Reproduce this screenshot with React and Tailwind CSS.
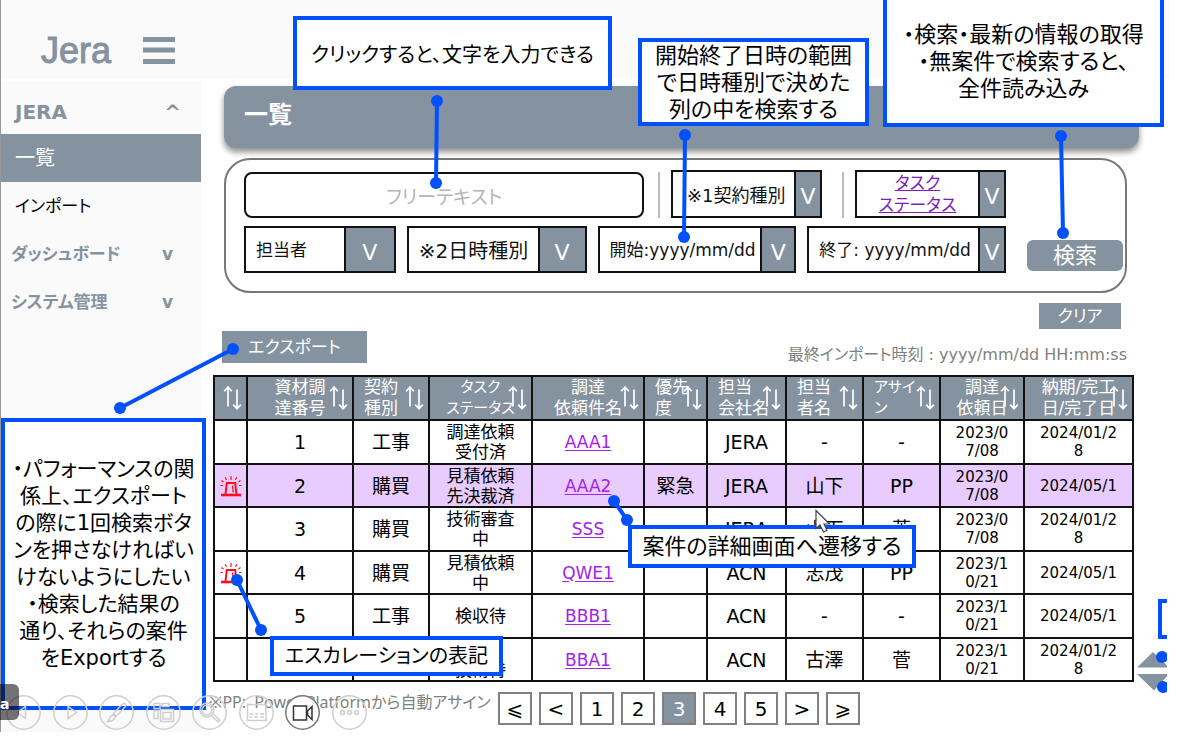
import React from "react";

const sortable = [
  { label: ["", ""], w: "w-[33px]", align: "text-center" },
  { label: ["資材調", "達番号"], w: "w-[106px]", align: "text-center" },
  { label: ["契約", "種別"], w: "w-[76px]", align: "text-left pl-[10px]" },
  { label: ["タスク", "ステータス"], w: "w-[103px]", align: "text-center text-[15px]" },
  { label: ["調達", "依頼件名"], w: "w-[112px]", align: "text-center" },
  { label: ["優先", "度"], w: "w-[63px]", align: "text-left pl-[10px]" },
  { label: ["担当", "会社名"], w: "w-[79px]", align: "text-left pl-[10px]" },
  { label: ["担当", "者名"], w: "w-[77px]", align: "text-left pl-[10px]" },
  { label: ["アサイ", "ン"], w: "w-[77px]", align: "text-left pl-[10px] text-[15px]" },
  { label: ["調達", "依頼日"], w: "w-[84px]", align: "text-center" },
  { label: ["納期/完工", "日/完了日"], w: "w-[109px]", align: "text-center" },
];

const rows = [
  { n: 1, type: "工事", status: ["調達依頼", "受付済"], name: "AAA1", pri: "", company: "JERA", person: "-", assign: "-", req: ["2023/0", "7/08"], due: ["2024/01/2", "8"] },
  { n: 2, alert: true, hot: true, type: "購買", status: ["見積依頼", "先決裁済"], name: "AAA2", pri: "緊急", company: "JERA", person: "山下", assign: "PP", req: ["2023/0", "7/08"], due: ["2024/05/1"] },
  { n: 3, type: "購買", status: ["技術審査", "中"], name: "SSS", pri: "", company: "JERA", person: "山下", assign: "菅", req: ["2023/0", "7/08"], due: ["2024/01/2", "8"] },
  { n: 4, alert: true, type: "購買", status: ["見積依頼", "中"], name: "QWE1", pri: "", company: "ACN", person: "志茂", assign: "PP", req: ["2023/1", "0/21"], due: ["2024/05/1"] },
  { n: 5, type: "工事", status: ["検収待"], name: "BBB1", pri: "", company: "ACN", person: "-", assign: "-", req: ["2023/1", "0/21"], due: ["2024/05/1"] },
  { n: 6, type: "購買", status: ["受付", "技術待"], name: "BBA1", pri: "", company: "ACN", person: "古澤", assign: "菅", req: ["2023/1", "0/21"], due: ["2024/01/2", "8"] },
];

function Lines({ items }) {
  return items.map((t, i) => (
    <span key={i} className="block whitespace-nowrap">
      {t}
    </span>
  ));
}

function SortIcon() {
  return (
    <svg viewBox="0 0 19 26" className="h-[26px] w-[19px]" fill="none" stroke="white" strokeWidth="1.7" aria-hidden="true">
      <path d="M5 21.500V2M1.200 6.200 5 2l3.800 4.200M14 4.500v19.300M10.200 19.600l3.800 4.200 3.800-4.200" />
    </svg>
  );
}

function Siren() {
  return (
    <svg viewBox="0 0 22 22" className="mx-auto h-[22px] w-[22px]" fill="none" stroke="#fb0d1b" aria-label="エスカレーション" role="img">
      <path d="M5.500 19 6.800 8h8.400l1.300 11" strokeWidth="2" />
      <path d="M12.600 10.500l.6 7" strokeWidth="1.300" />
      <path d="M1 20h20" strokeWidth="2.600" />
      <path d="M11 1v4M5.200 2.200l1.300 2.600M16.800 2.200l-1.300 2.600M1.500 5.500l2 1.400M20.500 5.500l-2 1.400M.5 10.500h2.500M21.500 10.500H19" strokeWidth="1.200" />
    </svg>
  );
}

function Select({ id, label, text, cols, height, size }) {
  return (
    <div className={`grid min-w-0 border-2 border-[#111] bg-white ${cols} ${height}`}>
      <select
        id={id}
        aria-label={label}
        className={`col-span-full col-start-1 row-start-1 h-full w-full min-w-0 appearance-none bg-transparent pt-0.5 text-[#111] outline-none ${size}`}
      >
        <option>{text}</option>
      </select>
      <span className="pointer-events-none col-start-2 row-start-1 flex items-center justify-center border-l-2 border-[#111] bg-[#8592a0] pt-1.5 text-[22px] leading-none text-white">
        V
      </span>
    </div>
  );
}

function Callout({ place, text, lines }) {
  return (
    <div className={`absolute flex flex-col items-center justify-center border-4 border-[#0050ff] bg-white text-center text-black ${place} ${text}`}>
      <Lines items={lines} />
    </div>
  );
}

const links = [
  [437, 101, 436, 183],
  [685, 135, 684, 237],
  [1061, 136, 1063, 233],
  [120, 408, 233, 349],
  [237, 580, 261, 630],
  [614, 501, 627, 520],
];

const tools = [
  ["前へ", <path d="M19.500 11.500v12l-8-6z" />],
  ["次へ", <path d="M15 11.500v12l8.500-6z" />],
  ["ペン", <path d="M26 8.500c1.500 1 1 2.500 0 3.500l-8.500 9-3-2.500 8.500-9c1-1 2-1.500 3-1zM14 19.500l2.500 2.200c-1 3-3.500 4.800-8 5 2-2 2.500-5.500 5.500-7.200z" />],
  ["一覧表示", <path d="M8 8.500h6v5H8zM16 8.500h7v3h-7zM8 15.500h4v8H8zM14.500 14.500h13v12h-13zM17 17.500h8v6.500h-8z" />],
  ["拡大", <path d="M22 15a7 7 0 1 1-14 0 7 7 0 0 1 14 0zM20 21l6 6 1.800-1.800-6-6M20 15a5 5 0 1 1-10 0 5 5 0 0 1 10 0z" />],
  ["字幕", <path d="M8.500 9.500h18.500v16H8.500zM10.500 19h4M16 19h3M21 19h4M10.500 22h3M15 22h4M21 22h4" />],
  ["カメラ", <path d="M8.500 11h13v14h-13zM22.500 16l4.500-4.500v13L22.500 20z" />],
  ["その他", <path d="M12.500 17.500a2 2 0 1 1-4 0 2 2 0 0 1 4 0zM19.500 17.500a2 2 0 1 1-4 0 2 2 0 0 1 4 0zM26.500 17.500a2 2 0 1 1-4 0 2 2 0 0 1 4 0z" />],
];

export default function App() {
  return (
    <div className="relative overflow-hidden bg-white font-['DejaVu_Sans','Noto_Sans_CJK_JP',sans-serif] text-black [font-feature-settings:'palt']">
      <div className="border-l border-[#999]">
        <header className="mr-4 flex h-[78px] items-center gap-8 bg-[#fafafa] pl-10 pt-6">
          <span className="font-['Liberation_Sans'] text-[36px] leading-none text-[#8592a0] [-webkit-text-stroke:1px_#8592a0]">Jera</span>
          <button type="button" aria-label="メニュー">
            <svg viewBox="0 0 32 28" className="h-7 w-8" fill="#8592a0" aria-hidden="true">
              <path d="M0 0h32v5H0zM0 10.500h32v5H0zM0 22h32v5H0z" />
            </svg>
          </button>
        </header>

        <div className="flex">
          <aside className="mt-1 w-[200px] shrink-0 bg-[#fafafa] pt-1 text-[17px] leading-none">
            <nav className="flex flex-col">
              <button type="button" className="flex h-12 items-center justify-between pl-3.5 pr-5 pt-1 text-[20px] font-bold text-[#8592a0]">
                <span>JERA</span>
                <span>^</span>
              </button>
              <a href="#list" className="flex h-12 items-center bg-[#8592a0] pl-3.5 text-[20px] text-white">一覧</a>
              <a href="#import" className="flex h-12 items-center pl-3.5">インポート</a>
              <button type="button" className="flex h-12 items-center justify-between pl-2.5 pr-7 font-bold text-[#8592a0]">
                <span>ダッシュボード</span>
                <span>v</span>
              </button>
              <button type="button" className="flex h-12 items-center justify-between pl-2.5 pr-7 font-bold text-[#8592a0]">
                <span>システム管理</span>
                <span>v</span>
              </button>
            </nav>
          </aside>

          <main className="min-w-0 flex-1 pb-[7px] pl-3 pr-[46px] pt-2">
            <h1 className="ml-[11px] h-[62px] rounded-xl bg-[#8592a0] pl-5 pt-4 text-[24px] font-bold leading-[26px] text-white shadow-[0_4px_6px_rgba(0,0,0,0.45)]">
              一覧
            </h1>

            <form className="ml-[11px] mr-3 mt-2.5 flex items-end gap-[21px] rounded-[26px] border-2 border-[#777] pb-[18px] pl-[18px] pr-0.5 pt-2.5" onSubmit={(e) => e.preventDefault()}>
              <div className="flex min-w-0 flex-1 flex-col gap-2">
                <div className="flex items-end">
                  <input
                    type="text"
                    aria-label="フリーテキスト"
                    placeholder="フリーテキスト"
                    className="h-[46px] min-w-0 flex-1 rounded-lg border-2 border-[#111] pt-1 text-center text-[19px] outline-none placeholder:text-[#b5b5b5]"
                  />
                  <span className="ml-3.5 mr-[11px] h-[46px] w-0.5 bg-[#bbb]" />
                  <div className="w-[151px]">
                    <Select id="contract" label="契約種別" text="※1契約種別" cols="grid-cols-[1fr_26px]" height="h-12" size="pl-3.5 text-[18px]" />
                  </div>
                  <span className="ml-5 mr-[11px] h-[46px] w-0.5 bg-[#bbb]" />
                  <div className="grid h-12 w-[151px] grid-cols-[1fr_26px] border-2 border-[#111]">
                    <a href="#status" className="flex flex-col items-center justify-center text-[17px] leading-[22px] text-[#7d1fc4] underline">
                      <Lines items={["タスク", "ステータス"]} />
                    </a>
                    <button type="button" aria-label="タスクステータスを選択" className="flex items-center justify-center border-l-2 border-[#111] bg-[#8592a0] pt-1.5 text-[22px] leading-none text-white">
                      V
                    </button>
                  </div>
                </div>
                <div className="grid grid-cols-[152fr_180fr_199fr_199fr] gap-[11px]">
                  <Select id="person" label="担当者" text="担当者" cols="grid-cols-[1fr_50px]" height="h-[47px]" size="pl-2.5 text-[17px]" />
                  <Select id="datetype" label="日時種別" text="※2日時種別" cols="grid-cols-[1fr_47px]" height="h-[47px]" size="pl-2.5 text-[20px]" />
                  <Select id="start" label="開始" text="開始:yyyy/mm/dd" cols="grid-cols-[1fr_34px]" height="h-[47px]" size="pl-2.5 text-[17px]" />
                  <Select id="end" label="終了" text="終了: yyyy/mm/dd" cols="grid-cols-[1fr_26px]" height="h-[47px]" size="pl-2.5 text-[17px]" />
                </div>
              </div>
              <button type="submit" className="mb-0.5 h-[31px] w-24 rounded-md bg-[#8592a0] text-[22px] leading-none text-white">
                検索
              </button>
            </form>

            <div className="mr-[18px] mt-2.5 flex justify-end">
              <button type="button" className="h-[26px] w-[82px] bg-[#8592a0] text-[17px] leading-none text-white">クリア</button>
            </div>
            <div className="ml-[9px] mr-3 mt-0.5 flex items-end justify-between">
              <button type="button" className="h-8 w-[145px] bg-[#8592a0] text-[17px] leading-none text-white">エクスポート</button>
              <p className="text-[16px] leading-4 text-[#808080]">最終インポート時刻 : yyyy/mm/dd HH:mm:ss</p>
            </div>

            <div className="mr-2 mt-3">
              <table className="w-full table-fixed border-collapse text-center text-[19px] leading-[20px]">
                <thead>
                  <tr className="h-11 bg-[#8592a0] text-[17px] leading-[21px] text-white">
                    {sortable.map((c, i) => (
                      <th key={i} scope="col" className={`relative border-2 border-[#111] p-0 font-normal ${c.w} ${c.align}`}>
                        <Lines items={c.label} />
                        <button type="button" aria-label={`${c.label.join("")}並べ替え`} className="absolute right-1 top-2">
                          <SortIcon />
                        </button>
                      </th>
                    ))}
                  </tr>
                </thead>
                <tbody>
                  {rows.map((r) => (
                    <tr key={r.n} className={`odd:h-[44px] even:h-[43px] ${r.hot ? "bg-[#e8ccff]" : "bg-white"}`}>
                      <td className="border-2 border-[#111] p-0">{r.alert && <Siren />}</td>
                      <td className="border-2 border-[#111] p-0">{r.n}</td>
                      <td className="border-2 border-[#111] p-0">{r.type}</td>
                      <td className="border-2 border-[#111] p-0 text-[17px]"><Lines items={r.status} /></td>
                      <td className="border-2 border-[#111] p-0 text-[17px]">
                        <a href={`#${r.name}`} className="text-[#a222ee] underline underline-offset-2">{r.name}</a>
                      </td>
                      <td className="border-2 border-[#111] p-0">{r.pri}</td>
                      <td className="border-2 border-[#111] p-0">{r.company}</td>
                      <td className="border-2 border-[#111] p-0">{r.person}</td>
                      <td className="border-2 border-[#111] p-0">{r.assign}</td>
                      <td className="border-2 border-[#111] p-0 text-[15px] leading-[18px]"><Lines items={r.req} /></td>
                      <td className="border-2 border-[#111] p-0 text-[15px] leading-[18px]"><Lines items={r.due} /></td>
                    </tr>
                  ))}
                </tbody>
              </table>
            </div>

            <div className="-ml-1 mt-2.5 flex items-start">
              <p className="w-[289px] shrink-0 whitespace-nowrap font-['Noto_Sans','Noto_Sans_CJK_JP',sans-serif] text-[16px] leading-5 text-[#808080]">※PP:&nbsp; Power Platformから自動アサイン</p>
              <nav aria-label="ページ" className="flex gap-[7px]">
                {["⩽", "<", "1", "2", "3", "4", "5", ">", "⩾"].map((p) => (
                  <button
                    key={p}
                    type="button"
                    className={`h-[33px] w-[34px] border-2 border-[#808080] text-[20px] leading-none ${p === "3" ? "bg-[#8592a0] text-white" : "bg-white"}`}
                  >
                    {p}
                  </button>
                ))}
              </nav>
            </div>
          </main>
        </div>
      </div>

      <Callout place="left-[293px] top-4 h-[74px] w-[319px]" text="pt-1 text-[20px] leading-[28px]" lines={["クリックすると、文字を入力できる"]} />
      <Callout place="left-[638px] top-[38px] h-[88px] w-[231px]" text="text-[22px] leading-[27px]" lines={["開始終了日時の範囲", "で日時種別で決めた", "列の中を検索する"]} />
      <Callout place="left-[883px] -top-1 h-[131px] w-[281px]" text="text-[22px] leading-[27px]" lines={["・検索・最新の情報の取得", "・無案件で検索すると、", "全件読み込み"]} />
      <Callout
        place="left-[1px] top-[418px] h-[292px] w-[205px]"
        text="text-[21px] leading-[27px]"
        lines={["・パフォーマンスの関", "係上、エクスポート", "の際に1回検索ボタ", "ンを押さなければい", "けないようにしたい", "・検索した結果の", "通り、それらの案件", "をExportする"]}
      />
      <Callout place="left-[270px] top-[636px] h-10 w-[233px]" text="text-[20px] leading-[28px]" lines={["エスカレーションの表記"]} />
      <Callout place="left-[628px] top-[525px] h-[43px] w-[288px]" text="text-[22px] leading-[28px]" lines={["案件の詳細画面へ遷移する"]} />
      <div className="absolute left-[1158px] top-[599px] h-10 w-[9px] border-y-4 border-l-4 border-[#0050ff] bg-white" />

      <svg viewBox="0 0 1167 732" className="pointer-events-none absolute left-0 top-0 h-[732px] w-[1167px] max-w-none" aria-hidden="true">
        <path d="M1137 667.500 1153 652l16 15.500zM1137 674h32l-15 16.500z" fill="#8592a0" />
        <g fill="#0050ff" stroke="#0050ff">
          {links.map(([x1, y1, x2, y2], i) => (
            <g key={i}>
              <line x1={x1} y1={y1} x2={x2} y2={y2} strokeWidth="4" />
              <circle cx={x1} cy={y1} r="6" stroke="none" />
              <circle cx={x2} cy={y2} r="6" stroke="none" />
            </g>
          ))}
          <circle cx="1162" cy="657" r="6" stroke="none" />
          <circle cx="1163" cy="687" r="6" stroke="none" />
        </g>
        <path d="M816 510.500v18l4-3.500 3.500 7 3.500-1.800-3-6.200h5.500z" fill="white" stroke="#444" strokeWidth="1.200" />
      </svg>

      <div className="absolute left-1.5 top-[695px] flex w-[361px] justify-between">
        {tools.map(([name, icon]) => (
          <button
            key={name}
            type="button"
            aria-label={name}
            className={`size-[35px] rounded-full ${name === "カメラ" ? "bg-white text-[#333]" : "text-[#cfcfcf]"}`}
          >
            <svg viewBox="0 0 35 35" className="size-full" fill="none" stroke="currentColor" strokeWidth="1.500" aria-hidden="true">
              <circle cx="17.500" cy="17.500" r="16.700" stroke={name === "カメラ" ? "#777" : "#cfcfcf"} />
              {icon}
            </svg>
          </button>
        ))}
      </div>
      <div className="absolute -left-1.5 top-[684px] flex h-9 w-[25px] items-center rounded-md bg-black/55 pl-1.5 pt-1 text-[14px] font-bold text-white">a</div>
    </div>
  );
}
